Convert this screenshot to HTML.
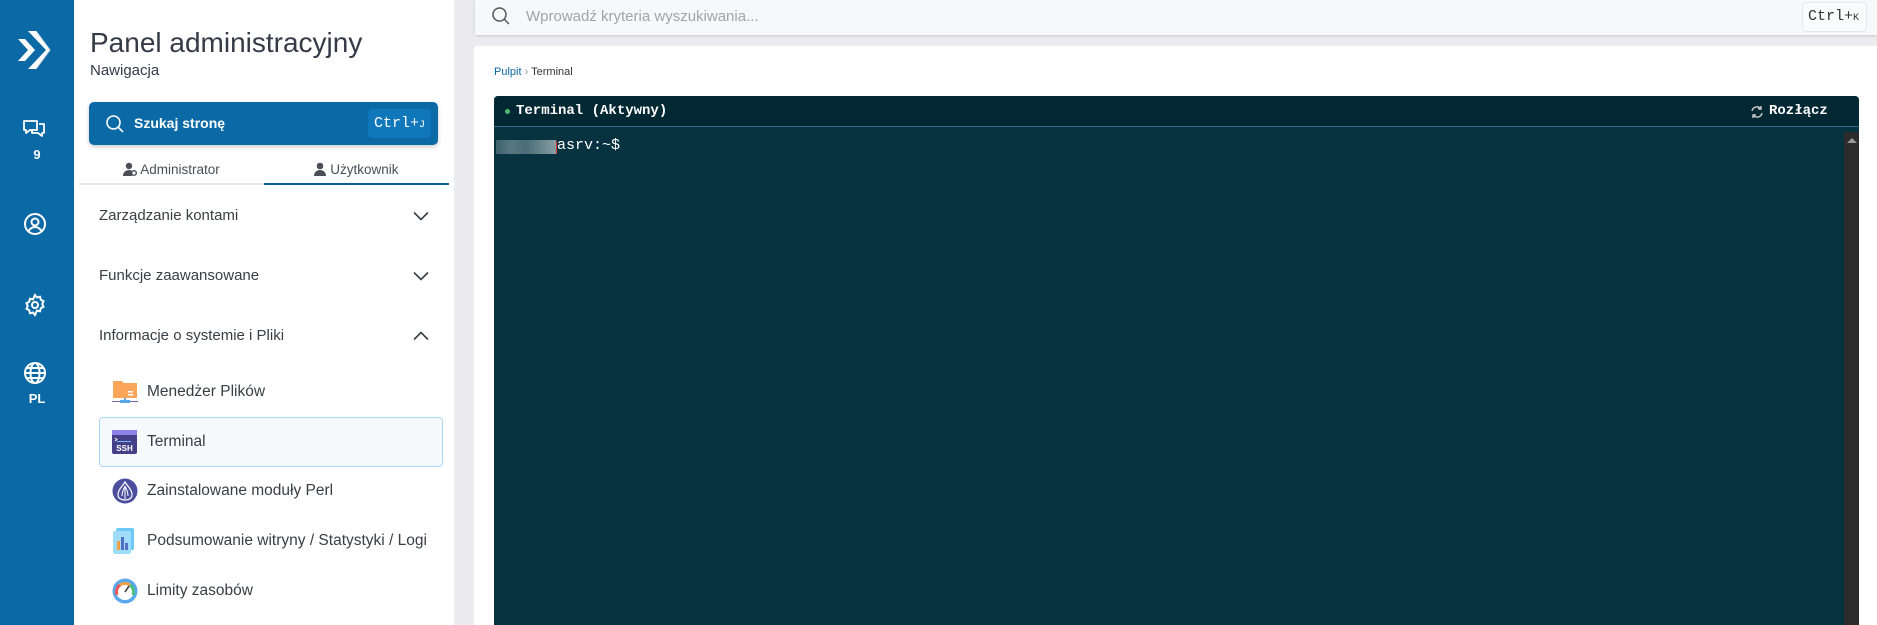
<!DOCTYPE html>
<html style="overflow:hidden"><head><meta charset="utf-8"><style>
*{box-sizing:border-box;margin:0;padding:0}
html,body{overflow:hidden}
body{width:1877px;height:625px;background:#ecebf0;font-family:"Liberation Sans",sans-serif;position:relative}
.abs{position:absolute}
.side{left:0;top:0;width:74px;height:625px;background:#0b69a6}
.nav{left:74px;top:0;width:380px;height:625px;background:#fff}
.mono{font-family:"Liberation Mono","DejaVu Sans Mono",monospace}
.item{position:absolute;left:99px;width:344px;height:50px;display:flex;align-items:center;font-size:15.5px;color:#3a3d45}
.item .ic{width:26px;height:26px;margin-left:13px;margin-right:9px;flex:none}
.cat{position:absolute;left:99px;width:330px;font-size:15px;color:#3a3d45;display:flex;justify-content:space-between;align-items:center}
</style></head><body>
<div class="abs side">
 <svg class="abs" style="left:16px;top:30px" width="36" height="40" viewBox="0 0 36 40"><path d="M2 9 L12 20 L2 31 L9 31 L19 20 L9 9Z" fill="#fff"/><path d="M12 1 L30 20 L12 39 L20 39 L34 20 L20 1Z" fill="#fff"/><path d="M20 1 L34 20 L20 39" fill="none" stroke="#cfd8e0" stroke-width="1"/></svg>
 <svg class="abs" style="left:22px;top:117px" width="24" height="24" viewBox="0 0 24 24" fill="none" stroke="#fff" stroke-width="1.8" stroke-linejoin="round"><path d="M2 4h13v9H8l-4 3v-3H2z"/><path d="M17 7h5v9h-2v3l-4-3h-6v-3"/></svg>
 <div class="abs" style="left:0;width:74px;top:147px;text-align:center;color:#fff;font-weight:bold;font-size:13px">9</div>
 <svg class="abs" style="left:23px;top:212px" width="24" height="24" viewBox="0 0 24 24" fill="none" stroke="#fff" stroke-width="2"><circle cx="12" cy="12" r="10"/><circle cx="12" cy="10" r="3.5"/><path d="M5.5 19c2-3 4-4 6.5-4s4.5 1 6.5 4"/></svg>
 <svg class="abs" style="left:23px;top:293px" width="24" height="24" viewBox="0 0 24 24" fill="none" stroke="#fff" stroke-width="2"><circle cx="12" cy="12" r="3"/><path d="M12 2l2 2.5 3-.8.8 3 2.7 1.5-1.2 2.8 1.2 2.8-2.7 1.5-.8 3-3-.8L12 22l-2-2.5-3 .8-.8-3-2.7-1.5L4.7 13 3.5 10.2 6.2 8.7l.8-3 3 .8z"/></svg>
 <svg class="abs" style="left:23px;top:361px" width="24" height="24" viewBox="0 0 24 24" fill="none" stroke="#fff" stroke-width="2"><circle cx="12" cy="12" r="10"/><ellipse cx="12" cy="12" rx="4.5" ry="10"/><path d="M2 12h20M4 7h16M4 17h16"/></svg>
 <div class="abs" style="left:0;width:74px;top:391px;text-align:center;color:#fff;font-weight:bold;font-size:13px">PL</div>
</div>
<div class="abs nav">
 <div class="abs" style="left:16px;top:27px;font-size:28px;color:#343a46">Panel administracyjny</div>
 <div class="abs" style="left:16px;top:62px;font-size:15px;color:#343a46">Nawigacja</div>
 <div class="abs" style="left:15px;top:102px;width:349px;height:43px;background:#0b69a6;border-radius:5px;box-shadow:0 2px 4px rgba(0,0,0,.2)">
  <svg class="abs" style="left:16px;top:12px" width="20" height="20" viewBox="0 0 20 20" fill="none" stroke="#fff" stroke-width="1.6"><circle cx="8.5" cy="8.5" r="6.5"/><path d="M13 13l5 5"/></svg>
  <div class="abs" style="left:45px;top:13px;color:#fff;font-weight:bold;font-size:14px">Szukaj stronę</div>
  <div class="abs mono" style="left:279px;top:7px;width:63px;height:29px;background:#1077bb;border-radius:4px;color:#fff;font-size:15px;line-height:29px;padding-left:6px">Ctrl+<span style="font-size:10px">J</span></div>
 </div>
 <div class="abs" style="left:5px;top:162px;width:185px;text-align:center;font-size:13.5px;color:#4a4e57">
  <svg width="14" height="14" viewBox="0 0 14 14" style="vertical-align:-2px"><circle cx="6" cy="4" r="3.2" fill="#4a4e57"/><path d="M0 14c0-4 3-6 6-6 1.5 0 2.5.4 3 1v5z" fill="#4a4e57"/><circle cx="11" cy="11" r="2.3" fill="none" stroke="#4a4e57" stroke-width="1.4"/></svg> Administrator</div>
 <div class="abs" style="left:190px;top:162px;width:185px;text-align:center;font-size:13.5px;color:#4a4e57">
  <svg width="12" height="14" viewBox="0 0 12 14" style="vertical-align:-2px"><circle cx="6" cy="4" r="3.3" fill="#4a4e57"/><path d="M0 14c0-4 3-6 6-6s6 2 6 6z" fill="#4a4e57"/></svg> Użytkownik</div>
 <div class="abs" style="left:5px;top:183px;width:185px;height:2px;background:#e6e7eb"></div>
 <div class="abs" style="left:190px;top:183px;width:185px;height:2px;background:#0b5f94"></div>
</div>
<div class="cat" style="top:207px">Zarządzanie kontami<svg width="16" height="10" viewBox="0 0 16 10" fill="none" stroke="#3a3d45" stroke-width="1.6"><path d="M1 1.5l7 7 7-7"/></svg></div>
<div class="cat" style="top:267px">Funkcje zaawansowane<svg width="16" height="10" viewBox="0 0 16 10" fill="none" stroke="#3a3d45" stroke-width="1.6"><path d="M1 1.5l7 7 7-7"/></svg></div>
<div class="cat" style="top:327px">Informacje o systemie i Pliki<svg width="16" height="10" viewBox="0 0 16 10" fill="none" stroke="#3a3d45" stroke-width="1.6"><path d="M1 8.5l7-7 7 7"/></svg></div>

<div class="item" style="top:367px"><svg class="ic" viewBox="0 0 26 26"><path d="M1 2h9l2 2h13v15H1z" fill="#fba55a"/><rect x="16" y="12" width="5" height="1.5" fill="#fff"/><rect x="16" y="15" width="5" height="1.5" fill="#fff"/><rect x="12" y="19" width="2" height="3" fill="#58a6e8"/><rect x="0" y="22" width="26" height="1" fill="#6a6ab0"/><rect x="8" y="21" width="10" height="3" fill="#58a6e8"/></svg>Menedżer Plików</div>
<div class="item" style="top:417px;border:1px solid #aad8f0;border-radius:4px;background:#f7fafd"><svg class="ic" style="margin-left:12px" viewBox="0 0 26 26"><rect x="0" y="1" width="25" height="24" rx="2" fill="#443f87"/><rect x="0" y="1" width="25" height="5" fill="#8e82e8"/><path d="M3 9l2 1.5-2 1.5" stroke="#fff" fill="none"/><rect x="5" y="12" width="14" height="1" fill="#7ab8ff"/><text x="12.5" y="22" font-size="8" font-weight="bold" fill="#fff" text-anchor="middle" font-family="Liberation Sans">SSH</text></svg>Terminal</div>
<div class="item" style="top:466px"><svg class="ic" viewBox="0 0 26 26"><circle cx="13" cy="13" r="12.5" fill="#4c4f9e"/><path d="M13 4c-4 6-7 8-7 13 0 3 3 5 7 5s7-2 7-5c0-5-3-7-7-13z" fill="none" stroke="#fff" stroke-width="1.2"/><path d="M13 8c-2 4-3 7-3 10M13 8c2 4 3 7 3 10M13 8v13" stroke="#fff" stroke-width="1" fill="none"/></svg>Zainstalowane moduły Perl</div>
<div class="item" style="top:516px"><svg class="ic" viewBox="0 0 26 26"><rect x="4" y="0" width="18" height="22" rx="2" fill="#6ec8f5"/><rect x="1" y="3" width="18" height="23" rx="2" fill="#9fdcfb"/><rect x="5" y="13" width="3" height="9" fill="#f0a044"/><rect x="9" y="9" width="3" height="13" fill="#5470c6"/><rect x="13" y="15" width="3" height="7" fill="#5470c6"/></svg>Podsumowanie witryny / Statystyki / Logi</div>
<div class="item" style="top:566px"><svg class="ic" viewBox="0 0 26 26"><circle cx="13" cy="13" r="12.5" fill="#5aa8ee"/><circle cx="13" cy="13" r="9" fill="#fff"/><path d="M5 17a8.5 8.5 0 0 1 3-10" stroke="#e85a5a" stroke-width="3" fill="none"/><path d="M8 7a8.5 8.5 0 0 1 10 0" stroke="#f0a044" stroke-width="3" fill="none"/><path d="M18 7a8.5 8.5 0 0 1 3 10" stroke="#4cc07a" stroke-width="3" fill="none"/><path d="M13 14l4-6" stroke="#444" stroke-width="1.6"/></svg>Limity zasobów</div>

<div class="abs" style="left:475px;top:0;width:1402px;height:35px;background:#f7f8fa;box-shadow:0 1px 3px rgba(0,0,0,.15)">
 <svg class="abs" style="left:16px;top:6px" width="20" height="20" viewBox="0 0 20 20" fill="none" stroke="#555" stroke-width="1.5"><circle cx="8.5" cy="8.5" r="6.5"/><path d="M13 13l5 5"/></svg>
 <div class="abs" style="left:51px;top:8px;font-size:15px;color:#a0a3ab">Wprowadź kryteria wyszukiwania...</div>
 <div class="abs mono" style="left:1327px;top:2px;width:65px;height:30px;border:1px solid #e4e6ea;border-radius:4px;background:#fafbfc;font-size:15px;line-height:28px;padding-left:5px;color:#333">Ctrl+<span style="font-size:10px">K</span></div>
</div>
<div class="abs" style="left:474px;top:46px;width:1403px;height:579px;background:#fff;border-radius:4px 0 0 0;overflow:hidden">
 <div class="abs" style="left:20px;top:20px;font-size:11px;color:#333"><span style="color:#0b69a6">Pulpit</span> <span style="color:#999">›</span> Terminal</div>
 <div class="abs" style="left:20px;top:50px;width:1365px;height:529px;background:#073341;border-radius:4px 4px 0 0;overflow:hidden">
  <div class="abs" style="left:0;top:0;width:1365px;height:31px;background:#012833;border-bottom:1px solid #2c6a88;border-radius:4px 4px 0 0">
   <div class="abs" style="left:11px;top:13px;width:5px;height:5px;border-radius:50%;background:#4cba6c"></div>
   <div class="abs mono" style="left:22px;top:7px;color:#fff;font-weight:bold;font-size:14px">Terminal (Aktywny)</div>
   <svg class="abs" style="left:1256px;top:9px" width="14" height="14" viewBox="0 0 14 14" fill="none" stroke="#ccc" stroke-width="1.4"><path d="M2 6a5 5 0 0 1 9-2M12 8a5 5 0 0 1-9 2"/><path d="M11 1v3H8M3 13v-3h3"/></svg>
   <div class="abs mono" style="left:1275px;top:7px;color:#fff;font-weight:bold;font-size:14px">Rozłącz</div>
  </div>
  <div class="abs" style="left:1350px;top:36px;width:15px;height:500px;background:#2b2b2b"><div style="margin:6px 0 0 3px;width:0;height:0;border-left:5px solid transparent;border-right:5px solid transparent;border-bottom:5px solid #999"></div></div>
  <div class="abs" style="left:2px;top:44px;width:60px;height:14px;background:linear-gradient(90deg,#4a6d78,#6b8a92,#5a7b84,#7f9aa0,#a8b8bc);opacity:.8"></div>
  <div class="abs" style="left:62px;top:45px;width:1px;height:13px;background:#e03030"></div>
  <div class="abs mono" style="left:63px;top:41px;color:#fff;font-size:15px">asrv:~$</div>
 </div>
</div>
</body></html>
